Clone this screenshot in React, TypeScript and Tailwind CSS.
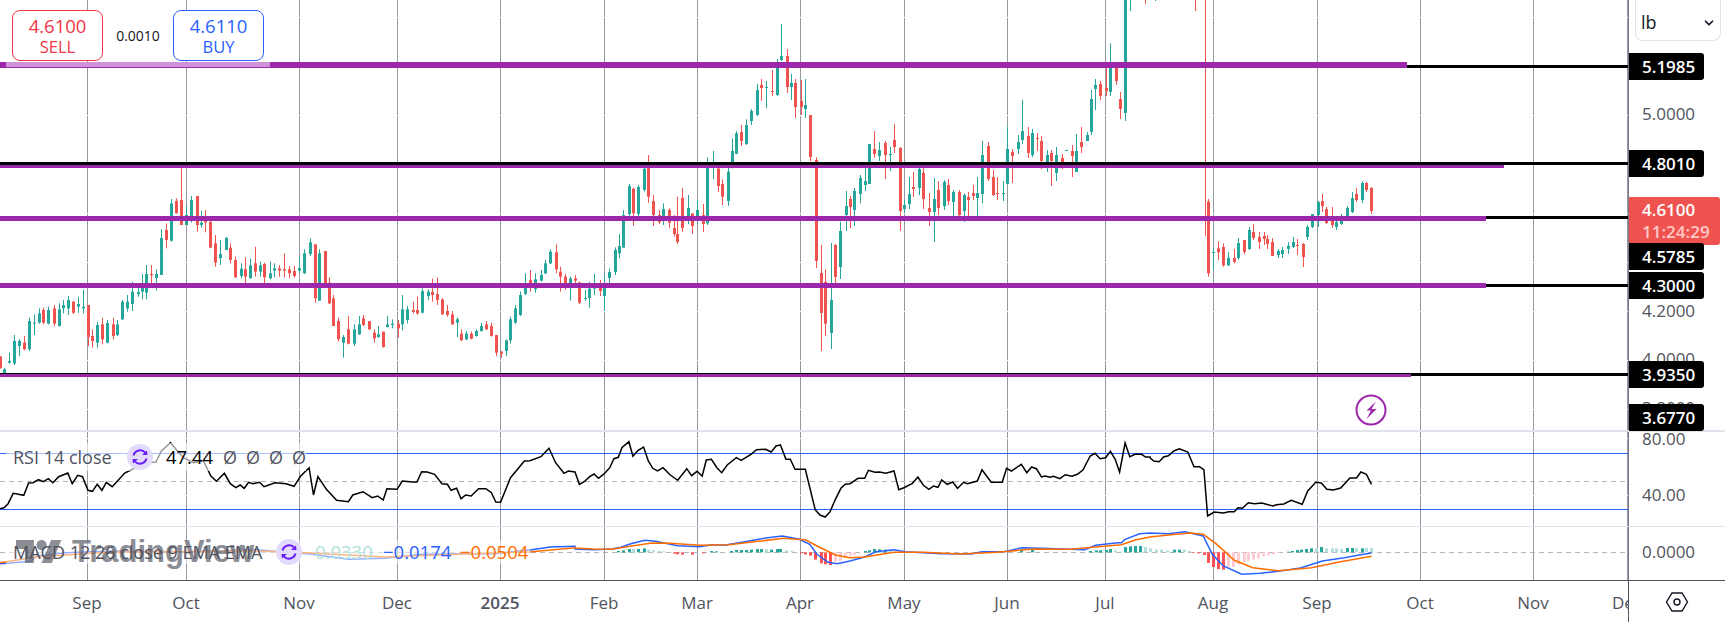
import { ChevronDown } from 'lucide-react';

type Candle = [number, number, number, number, number, 'g' | 'r'];
type Point = [number, number];

const UP = '#26a69a';
const DOWN = '#ef5350';
const PURPLE = '#9c27ab';

// x values below were read off three 575px wide crops, y is 3x the pixel row
const cx = (off: number, x: number) => off + (x * 575) / 1568;

const candlesA: Candle[] = [
  [0, 1068, 1070, 1105, 1105, 'r'], [11, 1103, 1108, 1125, 1125, 'g'], [25, 1058, 1083, 1088, 1091, 'g'], [39, 1005, 1023, 1090, 1095, 'g'],
  [53, 1018, 1023, 1038, 1068, 'g'], [66, 1008, 1028, 1048, 1051, 'r'], [80, 953, 963, 1048, 1053, 'g'], [93, 943, 968, 971, 1005, 'g'],
  [105, 925, 940, 968, 971, 'g'], [118, 923, 930, 968, 973, 'r'], [132, 920, 930, 971, 973, 'g'], [146, 915, 925, 971, 978, 'r'],
  [160, 910, 928, 978, 980, 'g'], [173, 900, 915, 925, 940, 'g'], [186, 888, 900, 925, 945, 'g'], [200, 903, 905, 938, 942, 'r'],
  [213, 890, 912, 920, 938, 'g'], [227, 870, 920, 925, 940, 'g'], [240, 915, 915, 1011, 1038, 'r'], [252, 988, 1008, 1023, 1043, 'r'],
  [265, 965, 975, 1028, 1043, 'g'], [279, 953, 973, 1018, 1033, 'r'], [293, 960, 969, 1028, 1030, 'g'], [307, 953, 973, 1008, 1018, 'r'],
  [320, 960, 973, 1005, 1008, 'g'], [334, 900, 905, 958, 960, 'g'], [347, 885, 905, 925, 935, 'g'], [361, 845, 875, 912, 933, 'g'],
  [375, 860, 876, 882, 890, 'g'], [388, 822, 860, 875, 898, 'g'], [399, 795, 822, 878, 898, 'g'], [412, 795, 822, 826, 860, 'r'],
  [426, 808, 822, 834, 872, 'g'], [439, 688, 714, 825, 825, 'g'], [453, 670, 690, 720, 745, 'r'], [467, 597, 610, 722, 725, 'g'],
  [481, 595, 603, 640, 640, 'r'], [494, 505, 600, 675, 675, 'r'], [508, 618, 645, 675, 675, 'g'], [522, 588, 600, 648, 668, 'g'],
  [536, 588, 588, 675, 695, 'r'], [549, 632, 668, 675, 683, 'g'], [560, 630, 660, 667, 697, 'r'], [574, 665, 665, 743, 743, 'r'],
  [587, 705, 730, 788, 800, 'r'], [601, 720, 762, 774, 795, 'g'], [615, 712, 713, 750, 750, 'g'], [628, 730, 743, 780, 790, 'r'],
  [642, 770, 780, 832, 833, 'r'], [656, 790, 806, 828, 835, 'g'], [669, 772, 808, 830, 850, 'r'], [683, 775, 796, 835, 835, 'g'],
  [696, 740, 790, 815, 830, 'r'], [710, 785, 796, 815, 830, 'g'], [721, 788, 792, 832, 850, 'r'], [735, 785, 820, 835, 838, 'g'],
  [748, 790, 805, 812, 832, 'g'], [762, 795, 805, 812, 830, 'r'], [775, 760, 808, 812, 832, 'r'], [789, 798, 808, 820, 835, 'r'],
  [802, 798, 813, 828, 833, 'r'], [816, 770, 804, 812, 820, 'g'], [830, 748, 760, 820, 822, 'g'], [844, 715, 727, 762, 768, 'g'],
  [858, 733, 733, 895, 908, 'r'], [871, 748, 760, 902, 902, 'g'], [885, 753, 753, 855, 855, 'r'], [896, 832, 848, 910, 912, 'r'],
  [909, 885, 895, 978, 978, 'r'], [922, 953, 963, 1018, 1025, 'r'], [936, 1005, 1011, 1028, 1073, 'g'], [950, 948, 988, 1031, 1033, 'r'],
  [964, 973, 988, 1031, 1038, 'g'], [978, 948, 973, 1003, 1005, 'g'], [991, 945, 955, 975, 978, 'r'], [1005, 963, 963, 988, 990, 'r'],
  [1019, 988, 998, 1015, 1028, 'r'], [1032, 978, 1003, 1011, 1013, 'g'], [1045, 995, 995, 1041, 1043, 'r'], [1056, 948, 973, 981, 983, 'g'],
  [1070, 958, 971, 975, 985, 'g'], [1084, 960, 971, 985, 1013, 'r'], [1097, 885, 928, 973, 991, 'g'], [1111, 918, 928, 960, 970, 'g'],
  [1125, 905, 930, 936, 940, 'r'], [1138, 890, 930, 940, 945, 'r'], [1152, 865, 873, 938, 940, 'g'], [1166, 868, 875, 888, 900, 'g'],
  [1179, 835, 876, 885, 905, 'r'], [1192, 832, 882, 900, 915, 'r'], [1205, 895, 898, 943, 945, 'r'], [1218, 915, 933, 945, 950, 'r'],
  [1232, 933, 943, 973, 975, 'r'], [1245, 953, 958, 968, 1011, 'g'], [1258, 988, 1001, 1021, 1023, 'r'], [1272, 993, 1001, 1018, 1020, 'g'],
  [1285, 995, 1001, 1016, 1018, 'r'], [1299, 988, 993, 1008, 1010, 'g'], [1312, 968, 978, 993, 995, 'g'], [1326, 963, 973, 988, 990, 'r'],
  [1340, 968, 978, 1008, 1010, 'r'], [1353, 1005, 1005, 1058, 1068, 'r'], [1365, 1053, 1055, 1061, 1073, 'r'], [1379, 1018, 1021, 1053, 1068, 'g'],
  [1392, 950, 958, 1021, 1031, 'g'], [1405, 915, 925, 968, 972, 'g'], [1418, 875, 885, 945, 948, 'g'], [1433, 820, 850, 882, 885, 'g'],
  [1446, 810, 840, 855, 875, 'r'], [1460, 820, 838, 868, 878, 'g'], [1474, 810, 825, 842, 845, 'g'], [1487, 780, 790, 820, 822, 'g'],
  [1501, 748, 755, 790, 792, 'g'], [1515, 733, 757, 808, 820, 'r'], [1528, 800, 815, 830, 875, 'r'], [1540, 822, 830, 852, 870, 'r'],
  [1555, 830, 835, 850, 902, 'g'],
];

const candlesB: Candle[] = [
  [0, 825, 835, 842, 850, 'r'], [12, 845, 847, 908, 912, 'r'], [26, 870, 894, 897, 903, 'g'], [39, 845, 866, 894, 923, 'g'],
  [53, 822, 860, 866, 885, 'g'], [67, 840, 858, 873, 888, 'r'], [80, 825, 860, 888, 933, 'g'], [94, 805, 816, 834, 850, 'g'],
  [108, 742, 750, 816, 825, 'g'], [119, 702, 738, 760, 775, 'g'], [132, 630, 645, 743, 743, 'g'], [146, 552, 558, 642, 650, 'g'],
  [159, 563, 566, 640, 678, 'r'], [173, 555, 561, 642, 650, 'g'], [187, 500, 506, 570, 575, 'g'], [200, 465, 500, 590, 608, 'r'],
  [214, 585, 603, 645, 678, 'r'], [228, 630, 645, 666, 672, 'r'], [241, 610, 627, 660, 675, 'g'], [255, 625, 630, 668, 685, 'r'],
  [269, 645, 684, 702, 710, 'r'], [279, 590, 702, 726, 732, 'r'], [293, 564, 594, 684, 695, 'r'], [307, 585, 624, 652, 672, 'g'],
  [320, 640, 640, 678, 702, 'r'], [334, 598, 630, 650, 670, 'g'], [348, 612, 645, 672, 696, 'r'], [361, 472, 490, 670, 675, 'g'],
  [375, 453, 490, 500, 537, 'g'], [389, 490, 506, 558, 576, 'r'], [402, 538, 552, 590, 615, 'r'], [416, 490, 515, 603, 618, 'g'],
  [429, 415, 453, 495, 505, 'g'], [440, 393, 400, 462, 462, 'g'], [453, 375, 396, 423, 438, 'r'], [467, 358, 375, 432, 435, 'g'],
  [481, 327, 333, 363, 375, 'g'], [495, 252, 270, 345, 348, 'g'], [508, 237, 255, 264, 303, 'r'], [522, 243, 261, 263, 324, 'g'],
  [536, 210, 273, 276, 288, 'r'], [550, 177, 204, 285, 288, 'g'], [563, 72, 168, 180, 183, 'g'], [577, 147, 168, 261, 279, 'r'],
  [590, 222, 249, 261, 300, 'g'], [601, 237, 249, 321, 354, 'r'], [615, 240, 303, 321, 345, 'r'], [628, 237, 315, 327, 354, 'g'],
  [642, 345, 345, 471, 483, 'r'], [656, 472, 480, 783, 804, 'r'], [670, 735, 819, 939, 1053, 'r'], [683, 808, 846, 971, 1008, 'r'],
  [697, 729, 900, 999, 1047, 'g'], [710, 732, 735, 831, 850, 'r'], [724, 665, 693, 801, 837, 'g'], [738, 573, 618, 645, 693, 'g'],
  [751, 588, 597, 621, 684, 'r'], [762, 564, 573, 630, 678, 'g'], [776, 525, 534, 582, 610, 'g'], [790, 500, 543, 555, 573, 'g'],
  [803, 432, 432, 552, 552, 'g'], [816, 393, 447, 462, 473, 'r'], [830, 426, 450, 468, 483, 'g'], [844, 423, 429, 465, 537, 'r'],
  [858, 441, 462, 465, 513, 'g'], [871, 372, 420, 441, 459, 'r'], [885, 441, 444, 633, 693, 'r'], [898, 600, 615, 627, 640, 'g'],
  [912, 531, 582, 612, 627, 'g'], [923, 516, 561, 567, 591, 'r'], [937, 500, 507, 564, 585, 'g'], [950, 500, 519, 597, 627, 'r'],
  [964, 579, 624, 636, 678, 'r'], [978, 534, 597, 636, 726, 'g'], [991, 543, 570, 624, 645, 'r'], [1005, 540, 546, 618, 630, 'g'],
  [1018, 537, 555, 603, 615, 'r'], [1032, 570, 576, 606, 648, 'g'], [1046, 570, 576, 645, 660, 'r'], [1060, 580, 585, 633, 666, 'g'],
  [1073, 576, 591, 600, 650, 'r'], [1084, 555, 579, 588, 600, 'r'], [1097, 531, 579, 594, 650, 'g'], [1111, 423, 465, 582, 610, 'g'],
  [1125, 426, 438, 537, 543, 'r'], [1139, 510, 531, 585, 588, 'r'], [1152, 531, 579, 582, 600, 'r'], [1166, 543, 579, 581, 603, 'g'],
  [1179, 381, 447, 552, 552, 'g'], [1193, 447, 456, 468, 549, 'r'], [1207, 405, 426, 447, 462, 'g'], [1220, 300, 393, 420, 432, 'g'],
  [1234, 381, 408, 459, 474, 'r'], [1245, 387, 399, 465, 471, 'g'], [1259, 399, 414, 416, 453, 'r'], [1272, 408, 423, 483, 507, 'r'],
  [1286, 450, 465, 495, 516, 'g'], [1299, 450, 459, 483, 558, 'r'], [1313, 441, 465, 519, 543, 'g'], [1327, 462, 474, 495, 507, 'r'],
  [1340, 450, 450, 453, 453, 'g'], [1354, 435, 453, 468, 531, 'r'], [1367, 402, 453, 516, 516, 'g'], [1381, 381, 426, 441, 459, 'r'],
  [1395, 396, 405, 423, 423, 'g'], [1406, 270, 297, 396, 405, 'g'], [1419, 237, 255, 267, 330, 'g'], [1433, 243, 252, 288, 300, 'r'],
  [1447, 204, 264, 273, 288, 'r'], [1460, 130, 204, 276, 288, 'g'], [1474, 204, 204, 243, 255, 'r'], [1487, 276, 297, 327, 357, 'r'],
  [1501, -10, -10, 339, 363, 'g'], [1514, -5, 33, 33, 33, 'g'], [1555, -5, 12, 12, 12, 'r'],
];

const candlesC: Candle[] = [
  [13, -5, 3, 3, 3, 'g'], [122, -5, 33, 33, 33, 'r'], [149, -5, 708, 708, 708, 'r'], [159, 597, 605, 820, 830, 'r'],
  [173, 745, 756, 759, 810, 'g'], [186, 724, 745, 757, 780, 'r'], [200, 730, 741, 796, 800, 'r'], [214, 756, 774, 796, 798, 'g'],
  [228, 747, 774, 786, 790, 'r'], [241, 714, 729, 774, 780, 'g'], [255, 720, 720, 756, 762, 'r'], [269, 681, 690, 747, 750, 'g'],
  [282, 672, 696, 714, 720, 'r'], [296, 696, 711, 726, 747, 'r'], [310, 696, 708, 717, 735, 'r'], [320, 705, 717, 732, 747, 'r'],
  [334, 714, 726, 768, 768, 'r'], [348, 747, 753, 765, 774, 'g'], [361, 741, 750, 762, 774, 'g'], [375, 726, 738, 747, 762, 'g'],
  [389, 711, 726, 741, 744, 'g'], [402, 717, 735, 738, 765, 'r'], [416, 729, 732, 771, 801, 'r'], [429, 675, 681, 711, 720, 'g'],
  [443, 642, 642, 681, 684, 'g'], [457, 603, 606, 645, 681, 'g'], [470, 582, 603, 618, 636, 'r'], [481, 621, 627, 669, 672, 'r'],
  [495, 621, 654, 675, 684, 'r'], [508, 654, 666, 681, 690, 'g'], [522, 642, 654, 672, 675, 'g'], [536, 618, 624, 648, 660, 'g'],
  [550, 576, 594, 636, 639, 'g'], [563, 564, 582, 600, 606, 'r'], [577, 543, 549, 600, 609, 'g'], [590, 546, 549, 570, 576, 'r'],
  [604, 561, 564, 633, 642, 'r'],
];

const allCandles = [
  ...candlesA.map((c) => ({ c, x: Math.round(cx(0, c[0])) })),
  ...candlesB.map((c) => ({ c, x: Math.round(cx(575, c[0])) })),
  ...candlesC.map((c) => ({ c, x: Math.round(cx(1150, c[0])) })),
];

const rsiA: Point[] = [[0,593],[11,590],[22,578],[36,547],[50,550],[65,553],[78,516],[90,515],[105,506],[118,512],[132,503],[144,515],[160,497],[185,486],[197,518],[212,493],[225,497],[240,538],[252,541],[265,520],[278,538],[290,514],[306,527],[340,486],[380,465],[400,455],[425,453],[440,420],[465,395],[480,415],[500,440],[528,455],[555,450],[575,495],[590,511],[612,487],[628,518],[643,530],[655,522],[666,532],[678,514],[690,518],[708,514],[720,527],[750,515],[780,518],[802,526],[820,495],[843,470],[855,552],[867,497],[890,535],[918,568],[950,572],[962,552],[990,542],[1015,560],[1030,555],[1045,567],[1055,533],[1083,535],[1097,510],[1125,513],[1137,513],[1150,482],[1165,483],[1185,490],[1205,518],[1220,520],[1230,538],[1245,532],[1257,563],[1270,552],[1285,555],[1305,533],[1325,533],[1340,545],[1352,573],[1365,574],[1392,500],[1430,450],[1445,449],[1475,437],[1497,412],[1515,455],[1538,487],[1550,480],[1568,483]];
const rsiB: Point[] = [[0,483],[12,520],[25,512],[40,497],[52,489],[64,502],[80,488],[95,470],[106,443],[118,439],[128,410],[147,392],[158,436],[172,418],[187,408],[200,450],[212,472],[225,480],[240,470],[260,492],[280,508],[305,473],[318,494],[333,481],[347,495],[358,447],[372,445],[387,470],[400,485],[415,462],[440,440],[453,448],[480,430],[495,416],[520,415],[535,423],[548,405],[560,402],[575,445],[587,445],[600,475],[628,475],[655,596],[668,612],[682,618],[695,603],[710,565],[725,532],[737,520],[750,518],[772,502],[790,502],[800,478],[818,484],[830,483],[848,487],[870,480],[883,536],[897,530],[920,517],[935,498],[950,523],[965,535],[978,525],[990,529],[1000,507],[1015,520],[1030,513],[1043,532],[1060,514],[1070,518],[1097,510],[1110,476],[1135,514],[1165,514],[1177,472],[1190,480],[1217,460],[1232,485],[1245,468],[1258,473],[1272,498],[1282,495],[1295,499],[1305,496],[1322,503],[1337,491],[1355,496],[1370,490],[1385,477],[1405,435],[1418,427],[1432,443],[1447,440],[1460,421],[1473,445],[1485,483],[1500,396],[1513,437],[1527,430],[1545,430],[1556,438],[1568,438]];
const rsiC: Point[] = [[0,440],[10,450],[25,452],[37,438],[50,434],[65,420],[80,413],[103,423],[120,467],[135,467],[147,476],[157,615],[175,603],[200,606],[215,602],[230,602],[240,590],[252,592],[268,575],[285,578],[305,576],[335,585],[345,581],[365,579],[385,568],[415,580],[430,540],[452,514],[467,516],[482,535],[500,537],[520,531],[545,501],[563,501],[575,483],[590,490],[604,520]];

const macdBlueA: Point[] = [[0,758],[30,756],[85,750],[100,735],[180,725],[300,720],[500,722],[700,716],[850,730],[950,745],[1050,742],[1150,730],[1250,728],[1350,728],[1450,716],[1500,708],[1568,706]];
const macdBlueB: Point[] = [[0,714],[50,716],[100,714],[125,709],[150,699],[190,688],[220,691],[280,704],[340,707],[370,702],[410,702],[460,693],[520,681],[565,675],[610,684],[640,700],[660,730],[690,754],[715,758],[750,750],[790,738],[820,722],[870,716],[900,722],[1000,728],[1080,729],[1110,722],[1170,722],[1220,710],[1270,712],[1390,716],[1420,703],[1480,695],[1490,695],[1500,685],[1540,668],[1568,666]];
const macdBlueC: Point[] = [[0,666],[50,668],[95,662],[145,675],[170,730],[200,765],[250,790],[300,787],[370,778],[410,771],[470,750],[530,740],[570,732],[604,726]];
const macdOrangeA: Point[] = [[0,755],[100,738],[300,723],[500,722],[700,720],[850,726],[1050,738],[1250,730],[1450,722],[1568,710]];
const macdOrangeB: Point[] = [[0,711],[50,714],[100,715],[150,706],[210,696],[260,697],[340,703],[420,701],[500,691],[570,682],[630,687],[660,705],[710,732],[750,740],[790,738],[870,724],[950,724],[1050,729],[1150,724],[1250,714],[1350,715],[1420,708],[1490,701],[1530,686],[1568,678]];
const macdOrangeC: Point[] = [[0,678],[50,672],[110,666],[145,670],[180,698],[230,748],[280,770],[350,779],[440,770],[520,752],[604,736]];

// histogram: x, end of bar (zero is at 724 in crop rows), fill
const histB: [number, number, string][] = [
  [118,720,UP],[132,718,UP],[146,714,UP],[159,714,'#b2dfdb'],[173,714,UP],[187,712,UP],[200,716,'#b2dfdb'],[214,718,'#b2dfdb'],[228,720,'#b2dfdb'],[241,721,'#b2dfdb'],
  [269,728,'#ff5252'],[279,730,'#ff5252'],[293,731,'#ff5252'],[320,731,'#ff5252'],[348,727,'#ff5252'],[372,720,UP],[385,721,UP],[425,720,UP],[440,717,UP],[453,717,UP],[467,717,UP],[481,716,UP],[495,714,UP],[508,714,UP],[520,715,'#b2dfdb'],[535,716,UP],[550,714,UP],[560,714,UP],[575,718,'#b2dfdb'],[590,720,'#b2dfdb'],
  [615,727,'#ff5252'],[628,730,'#ff5252'],[642,734,'#ff5252'],[655,746,'#ff5252'],[670,757,'#ff5252'],[683,760,'#ff5252'],[696,762,'#ff5252'],[710,752,'#ffcdd2'],[723,750,'#ffcdd2'],[737,740,'#ffcdd2'],[750,735,'#ffcdd2'],[762,732,'#ffcdd2'],
  [790,720,UP],[803,718,UP],[816,714,UP],[830,715,UP],[844,716,UP],[858,716,'#b2dfdb'],[1125,721,UP],[1152,721,UP],[1215,715,UP],[1245,715,UP],[1405,720,UP],[1420,718,UP],[1433,718,UP],[1447,717,UP],[1460,714,UP],[1473,718,'#b2dfdb'],[1485,722,'#b2dfdb'],[1500,708,UP],[1513,706,UP],[1527,705,UP],[1540,705,UP],[1555,708,'#b2dfdb'],
];
const histC: [number, number, string][] = [
  [0,712,'#b2dfdb'],[15,716,'#b2dfdb'],[30,716,'#b2dfdb'],[45,718,'#b2dfdb'],[65,716,UP],[78,716,UP],[92,716,'#b2dfdb'],[105,720,'#b2dfdb'],
  [118,726,'#ff5252'],[132,727,'#ff5252'],[146,732,'#ff5252'],[159,756,'#ff5252'],[172,768,'#ff5252'],[186,774,'#ff5252'],[200,776,'#ff5252'],
  [213,772,'#ffcdd2'],[227,768,'#ffcdd2'],[241,760,'#ffcdd2'],[255,754,'#ffcdd2'],[268,750,'#ffcdd2'],[282,746,'#ffcdd2'],[295,742,'#ffcdd2'],[309,736,'#ffcdd2'],[323,733,'#ffcdd2'],[335,730,'#ffcdd2'],[350,726,'#ffcdd2'],
  [375,722,UP],[387,720,UP],[400,717,UP],[412,716,UP],[425,714,UP],[440,712,UP],[452,712,'#b2dfdb'],[467,708,UP],[480,712,'#b2dfdb'],[495,712,'#b2dfdb'],[508,712,'#b2dfdb'],[522,714,'#b2dfdb'],[536,711,UP],[550,711,UP],[563,712,'#b2dfdb'],[577,712,UP],[590,711,'#b2dfdb'],[604,711,'#b2dfdb'],
];

const gridX = [87, 186, 299, 397, 500, 604, 697, 800, 904, 1007, 1105, 1213, 1317, 1420, 1533, 1627];

const timeLabels: [string, number, boolean][] = [
  ['Sep', 87, false], ['Oct', 186, false], ['Nov', 299, false], ['Dec', 397, false], ['2025', 500, true], ['Feb', 604, false],
  ['Mar', 697, false], ['Apr', 800, false], ['May', 904, false], ['Jun', 1007, false], ['Jul', 1105, false], ['Aug', 1213, false],
  ['Sep', 1317, false], ['Oct', 1420, false], ['Nov', 1533, false], ['Dec', 1627, false],
];

const path = (sets: [number, Point[]][], top: number) =>
  sets
    .flatMap(([off, pts]) => pts.map(([x, y]) => [cx(off, x), 311 + y / 3 - top]))
    .map(([x, y], i) => `${i ? 'L' : 'M'}${x.toFixed(1)} ${y.toFixed(1)}`)
    .join(' ');

function Grid({ height }: { height: number }) {
  return (
    <>
      {gridX.map((x) => (
        <rect key={x} x={x} y={0} width={1} height={height} fill="#9598a1" />
      ))}
    </>
  );
}

function MainChart() {
  return (
    <svg width={1628} height={430} className="block">
      <Grid height={430} />
      {[17, 115, 213, 262, 311, 360, 409].map((y) => (
        <rect key={y} x={0} y={y} width={1628} height={1} fill="#fff" />
      ))}
      {allCandles.map(({ c, x }, i) => {
        const [, hi, top, bot, lo, dir] = c;
        const fill = dir === 'g' ? UP : DOWN;
        return (
          <g key={i} fill={fill}>
            <rect x={x} y={hi / 3} width={1} height={(lo - hi) / 3} />
            {bot > top && <rect x={x - 1} y={top / 3} width={3} height={Math.max(1, (bot - top) / 3)} />}
          </g>
        );
      })}
      <rect x={0} y={62} width={1407} height={6} fill={PURPLE} />
      <rect x={6} y={62} width={264} height={5} fill="#ce93d8" />
      <rect x={1407} y={65} width={221} height={3} fill="#000" />
      <rect x={0} y={165} width={1504} height={3} fill={PURPLE} />
      <rect x={0} y={162} width={1628} height={3} fill="#000" />
      <rect x={0} y={216} width={1486} height={5} fill={PURPLE} />
      <rect x={1486} y={216} width={142} height={3} fill="#000" />
      <rect x={0} y={283} width={1486} height={5} fill={PURPLE} />
      <rect x={1486} y={284} width={142} height={3} fill="#000" />
      <rect x={0} y={374} width={1411} height={3} fill={PURPLE} />
      <rect x={0} y={373} width={1411} height={1} fill="#000" />
      <rect x={1411} y={373} width={217} height={3} fill="#000" />
      <circle cx={1371} cy={410} r={14.5} fill="#fff" stroke={PURPLE} strokeWidth={2} />
      <path d="M1376 401.5l-9.5 9h4.5l-4.5 8.5 10-10h-5z" fill={PURPLE} />
    </svg>
  );
}

function RsiChart() {
  return (
    <svg width={1628} height={94} className="block">
      <Grid height={94} />
      <rect x={0} y={6} width={1628} height={1} fill="#fff" />
      <rect x={0} y={63} width={1628} height={1} fill="#fff" />
      <rect x={0} y={21} width={1628} height={1} fill="#2962ff" />
      <rect x={0} y={77} width={1628} height={1} fill="#2962ff" />
      <line x1={0} x2={1628} y1={49.5} y2={49.5} stroke="#b2b5be" strokeDasharray="5 4" />
      <path d={path([[0, rsiA], [575, rsiB], [1150, rsiC]], 432)} fill="none" stroke="#000" strokeWidth={1.5} />
    </svg>
  );
}

function MacdChart() {
  return (
    <svg width={1628} height={53} className="block">
      <Grid height={53} />
      <line x1={0} x2={1628} y1={25.5} y2={25.5} stroke="#b2b5be" strokeDasharray="5 4" />
      {histB.map(([x, y, fill]) => (
        <rect key={x} x={Math.round(cx(575, x)) - 1} y={Math.min(y, 724) / 3 + 311 - 527} width={3} height={Math.abs(y - 724) / 3} fill={fill} />
      ))}
      {histC.map(([x, y, fill]) => (
        <rect key={x} x={Math.round(cx(1150, x)) - 1} y={Math.min(y, 724) / 3 + 311 - 527} width={3} height={Math.abs(y - 724) / 3} fill={fill} />
      ))}
      <path d={path([[0, macdBlueA], [575, macdBlueB], [1150, macdBlueC]], 527)} fill="none" stroke="#2962ff" strokeWidth={1.5} />
      <path d={path([[0, macdOrangeA], [575, macdOrangeB], [1150, macdOrangeC]], 527)} fill="none" stroke="#ff6d00" strokeWidth={1.5} />
    </svg>
  );
}

function SyncBadge() {
  return (
    <span className="flex h-[26px] w-[26px] shrink-0 items-center justify-center rounded-full bg-[#e3dafc]">
      <svg width={18} height={18} viewBox="0 0 18 18" fill="none" stroke="#6a1fff" strokeWidth={2}>
        <path d="M2.5 7.5a6.8 6.8 0 0 1 12-2.5" />
        <path d="M15.500 10.500a6.800 6.800 0 0 1-12 2.500" />
        <path d="M11 7l5.500 0L16 2.500z" fill="#6a1fff" stroke="none" />
        <path d="M7 11H1.500L2 15.500z" fill="#6a1fff" stroke="none" />
      </svg>
    </span>
  );
}

function PriceTag({ top, text }: { top: number; text: string }) {
  return (
    <div
      className="absolute left-0 flex h-[27px] w-[75px] items-center rounded-r-[3px] bg-black pl-[13px] text-[17px] font-semibold text-white"
      style={{ top }}
    >
      {text}
    </div>
  );
}

function AxisText({ y, text }: { y: number; text: string }) {
  return (
    <div className="absolute left-[13px] -translate-y-1/2 text-[17px] text-[#50535e]" style={{ top: y }}>
      {text}
    </div>
  );
}

export default function App() {
  return (
    <div className="flex h-[622px] w-[1725px] flex-col overflow-hidden bg-white font-['Open_Sans',sans-serif]">
      <div className="flex h-[430px]">
        <div className="relative w-[1628px]">
          <MainChart />
          <div className="absolute left-[12px] top-[10px] flex items-center">
            <div className="flex h-[51px] w-[91px] flex-col items-center justify-center rounded-lg border border-[#f23645] bg-white text-[#f23645]">
              <span className="text-[18.5px] font-medium leading-[23px]">4.6100</span>
              <span className="text-[16.5px] leading-[20px]">SELL</span>
            </div>
            <span className="w-[70px] text-center text-[14px] text-[#131722]">0.0010</span>
            <div className="flex h-[51px] w-[91px] flex-col items-center justify-center rounded-lg border border-[#2962ff] bg-white text-[#2962ff]">
              <span className="text-[18.5px] font-medium leading-[23px]">4.6110</span>
              <span className="text-[16.5px] leading-[20px]">BUY</span>
            </div>
          </div>
        </div>
        <div className="relative w-[97px] border-l border-[#787b86]">
          <div className="absolute left-[6px] top-0 flex h-[41px] w-[86px] items-center justify-between rounded-b-lg border border-t-0 border-[#e0e3eb] pl-[5px] pr-[4px] pt-[5px] text-[18px] text-[#131722]">
            <span>lb</span>
            <ChevronDown size={14} strokeWidth={3} />
          </div>
          <AxisText y={114} text="5.0000" />
          <AxisText y={311} text="4.2000" />
          <AxisText y={359} text="4.0000" />
          <AxisText y={408} text="3.8000" />
          <PriceTag top={53} text="5.1985" />
          <PriceTag top={150} text="4.8010" />
          <div className="absolute left-0 top-[197px] flex h-[48px] w-[91px] flex-col justify-center rounded-r-[3px] bg-[#ef5350] pl-[13px] text-[17px] font-semibold leading-[22px] text-white">
            <span>4.6100</span>
            <span className="text-[#ffc9c7]">11:24:29</span>
          </div>
          <PriceTag top={243} text="4.5785" />
          <PriceTag top={272} text="4.3000" />
          <PriceTag top={361} text="3.9350" />
          <PriceTag top={404} text="3.6770" />
        </div>
      </div>

      <div className="h-[2px] bg-[#e0e3eb]" />

      <div className="flex h-[94px]">
        <div className="relative w-[1628px]">
          <RsiChart />
          <div className="absolute left-[6px] top-[11px] flex h-[28px] w-[300px] items-center bg-white/60 pl-[7px] text-[18px]">
            <span className="w-[118px] whitespace-nowrap text-[#50535e]">RSI 14 close</span>
            <SyncBadge />
            <span className="ml-[13px] w-[59px] text-[18.5px] text-black">47.44</span>
            <span className="flex gap-[9px] text-[#50535e]">
              <span>Ø</span>
              <span>Ø</span>
              <span>Ø</span>
              <span>Ø</span>
            </span>
          </div>
        </div>
        <div className="relative w-[97px] border-l border-[#787b86]">
          <AxisText y={7} text="80.00" />
          <AxisText y={63} text="40.00" />
        </div>
      </div>

      <div className="h-px bg-[#e0e3eb]" />

      <div className="flex h-[53px]">
        <div className="relative w-[1628px]">
          <MacdChart />
          <div className="absolute left-[6px] top-[13px] flex h-[24px] w-[524px] items-center bg-white/50 pl-[7px] text-[18px]">
            <span className="w-[263px] whitespace-nowrap text-[#50535e]">MACD 12 26 close 9 EMA EMA</span>
            <SyncBadge />
            <span className="ml-[13px] w-[68px] text-[18.5px] text-[#b2dfdb]">0.0330</span>
            <span className="w-[77px] text-[18.5px] text-[#2962ff]">−0.0174</span>
            <span className="text-[18.5px] text-[#ff6d00]">−0.0504</span>
          </div>
          <div className="absolute left-[16px] top-[9px] flex items-center gap-[10px] opacity-65">
            <svg width={46} height={23} viewBox="0 4 36 18" fill="#50535e">
              <path d="M14 22H7V11H0V4h14v18zM28 22h-8l7.500-18h8L28 22z" />
              <circle cx={20} cy={8} r={4} />
            </svg>
            <span className="font-['Liberation_Sans',sans-serif] text-[31px] font-bold leading-none text-[#50535e]">TradingView</span>
          </div>
        </div>
        <div className="relative w-[97px] border-l border-[#787b86]">
          <AxisText y={25} text="0.0000" />
        </div>
      </div>

      <div className="flex h-[42px] border-t border-[#50535e]">
        <div className="relative w-[1628px] overflow-hidden text-[17px] text-[#50535e]">
          {timeLabels.map(([label, x, bold]) => (
            <span
              key={label + x}
              className={bold ? 'absolute top-[9px] -translate-x-1/2 font-semibold' : 'absolute top-[9px] -translate-x-1/2'}
              style={{ left: x }}
            >
              {label}
            </span>
          ))}
        </div>
        <div className="flex w-[97px] items-center justify-center border-l border-[#50535e]">
          <svg width={24} height={22} viewBox="0 0 24 22" fill="none" stroke="#131722" strokeWidth={1.4}>
            <path d="M7 2h10l5.500 9-5.500 9H7l-5.500-9z" />
            <circle cx={12} cy={11} r={3} />
          </svg>
        </div>
      </div>
    </div>
  );
}
